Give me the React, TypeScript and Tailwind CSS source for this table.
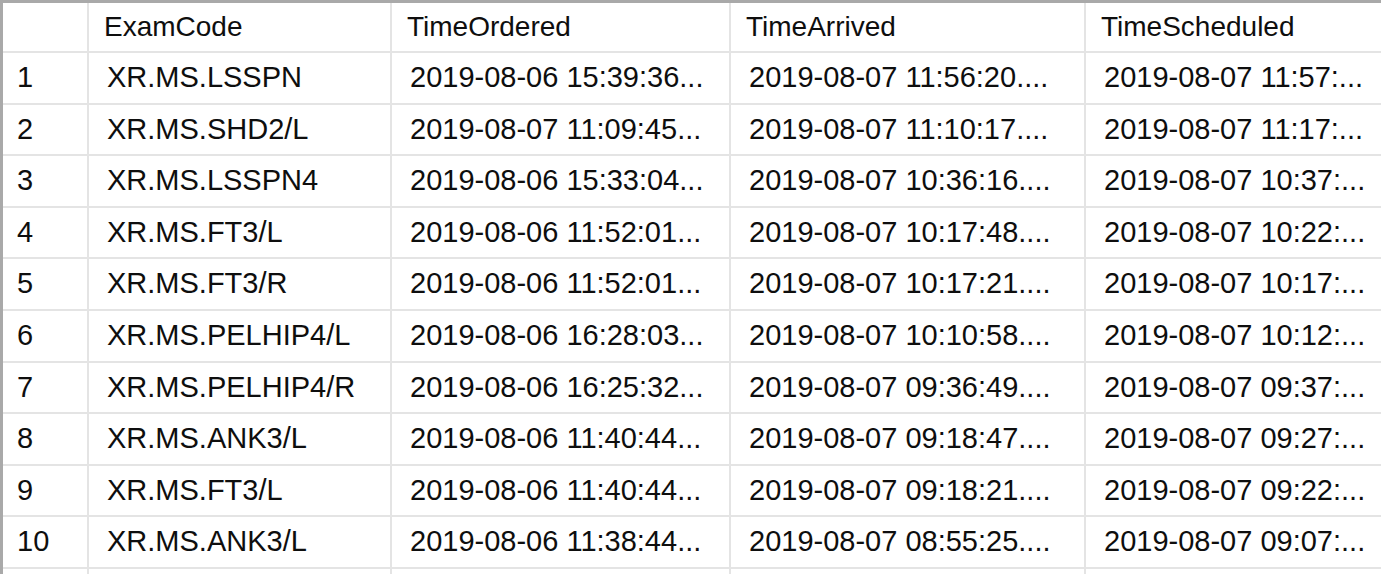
const COLS = ['ExamCode', 'TimeOrdered', 'TimeArrived', 'TimeScheduled'];

const ROWS: string[][] = [
  ['XR.MS.LSSPN', '2019-08-06 15:39:36...', '2019-08-07 11:56:20....', '2019-08-07 11:57:...'],
  ['XR.MS.SHD2/L', '2019-08-07 11:09:45...', '2019-08-07 11:10:17....', '2019-08-07 11:17:...'],
  ['XR.MS.LSSPN4', '2019-08-06 15:33:04...', '2019-08-07 10:36:16....', '2019-08-07 10:37:...'],
  ['XR.MS.FT3/L', '2019-08-06 11:52:01...', '2019-08-07 10:17:48....', '2019-08-07 10:22:...'],
  ['XR.MS.FT3/R', '2019-08-06 11:52:01...', '2019-08-07 10:17:21....', '2019-08-07 10:17:...'],
  ['XR.MS.PELHIP4/L', '2019-08-06 16:28:03...', '2019-08-07 10:10:58....', '2019-08-07 10:12:...'],
  ['XR.MS.PELHIP4/R', '2019-08-06 16:25:32...', '2019-08-07 09:36:49....', '2019-08-07 09:37:...'],
  ['XR.MS.ANK3/L', '2019-08-06 11:40:44...', '2019-08-07 09:18:47....', '2019-08-07 09:27:...'],
  ['XR.MS.FT3/L', '2019-08-06 11:40:44...', '2019-08-07 09:18:21....', '2019-08-07 09:22:...'],
  ['XR.MS.ANK3/L', '2019-08-06 11:38:44...', '2019-08-07 08:55:25....', '2019-08-07 09:07:...'],
];

// column widths incl. the 2px right grid line
const W = ['w-[86px]', 'w-[303px]', 'w-[339px]', 'w-[355px]'];
const cell = 'flex shrink-0 items-center overflow-hidden whitespace-nowrap border-r-2 border-[#e4e4e4]';

export default function App() {
  return (
    <div className="h-[574px] w-[1381px] overflow-hidden bg-white text-[#0e0e0e]" style={{ fontFamily: '"Liberation Sans", Arial, sans-serif' }}>
      <div className="border-l-[3px] border-t-[3px] border-[#a9a9a9]">
        {/* header */}
        <div className="flex h-[50px] border-b-2 border-[#e4e4e4] text-[28px]">
          <div className={`${cell} ${W[0]}`} />
          {COLS.map((c, i) => (
            <div key={c} className={i < 3 ? `${cell} ${W[i + 1]} pl-[15px]` : 'flex flex-1 items-center whitespace-nowrap pl-[15px]'}>{c}</div>
          ))}
        </div>

        {ROWS.map((r, n) => (
          <div key={n} className="flex h-[51.6px] border-b-2 border-[#e4e4e4] text-[29px]">
            <div className={`${cell} ${W[0]} pl-[14px]`}>{n + 1}</div>
            {r.map((v, i) => (
              <div key={i} className={i < 3 ? `${cell} ${W[i + 1]} pl-[18px]` : 'flex flex-1 items-center whitespace-nowrap pl-[18px]'}>{v}</div>
            ))}
          </div>
        ))}

        {/* next row, cut off */}
        <div className="flex h-[51.6px]">
          <div className={`${cell} ${W[0]}`} />
          <div className={`${cell} ${W[1]}`} />
          <div className={`${cell} ${W[2]}`} />
          <div className={`${cell} ${W[3]}`} />
          <div className="flex-1" />
        </div>
      </div>
    </div>
  );
}
